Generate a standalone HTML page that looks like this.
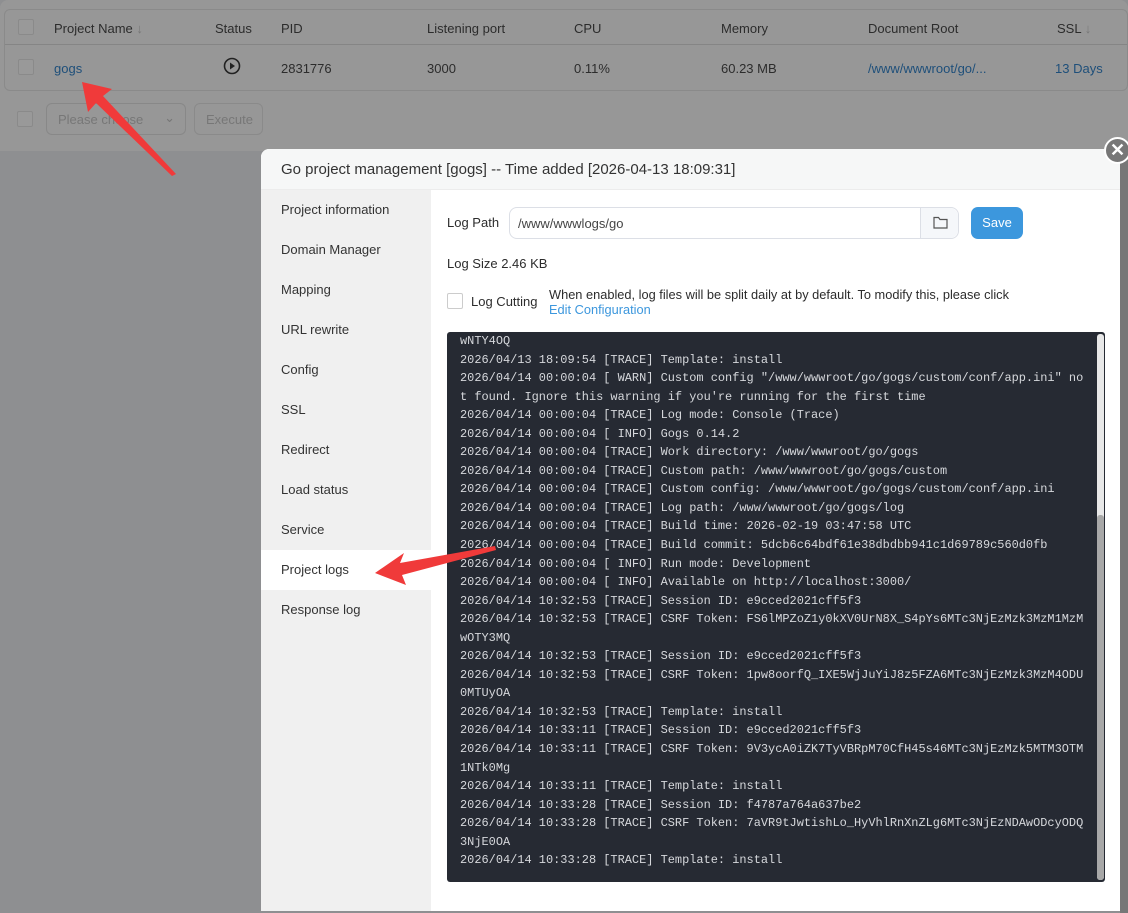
<!DOCTYPE html>
<html><head><meta charset="utf-8"><style>
*{box-sizing:border-box;margin:0;padding:0}
body{width:1128px;height:913px;overflow:hidden;background:#8e8f91;font-family:"Liberation Sans",sans-serif;font-size:13px;color:#333;position:relative}
.top{position:absolute;left:0;top:0;width:1128px;height:151px;background:#979797;border-radius:8px 8px 0 0}
.tbl{position:absolute;left:4px;top:9px;width:1124px;height:82px;border:1px solid #8a8a8a;border-radius:6px}
.hr{position:absolute;left:0;top:34px;width:100%;border-top:1px solid #858585}
.t{position:absolute;color:#2c2c2c;font-size:13px}
.lnk{color:#1e4f7a}
.cb{position:absolute;width:16px;height:16px;border:1px solid #8a8a8a;border-radius:2px;background:#999}
.modal{position:absolute;left:261px;top:149px;width:859px;height:762px;background:#fff;border-radius:8px 0 0 0;overflow:hidden}
.mh{height:41px;background:#f6f7f7;border-bottom:1px solid #ececec;padding:12px 20px;font-size:15px;color:#333}
.side{position:absolute;left:0;top:41px;width:170px;bottom:0;background:#f0f0f0}
.side div{height:40px;line-height:40px;padding-left:20px;font-size:13px;color:#333}
.side .on{background:#fff}
.log{position:absolute;left:186px;top:183px;width:658px;height:550px;background:#262a33;border-radius:3px;overflow:hidden;padding:0 13px;font-family:"Liberation Mono",monospace;font-size:11.95px;line-height:18.55px;color:#d6d8dc;white-space:pre}
</style></head><body>
<div class="top">
 <div class="tbl">
  <div class="cb" style="left:13px;top:9px"></div>
  <span class="t" style="left:49px;top:11px">Project Name <span style="color:#777">↓</span></span>
  <span class="t" style="left:210px;top:11px">Status</span>
  <span class="t" style="left:276px;top:11px">PID</span>
  <span class="t" style="left:422px;top:11px">Listening port</span>
  <span class="t" style="left:569px;top:11px">CPU</span>
  <span class="t" style="left:716px;top:11px">Memory</span>
  <span class="t" style="left:863px;top:11px">Document Root</span>
  <span class="t" style="left:1052px;top:11px">SSL <span style="color:#777">↓</span></span>
  <div class="hr"></div>
  <div class="cb" style="left:13px;top:49px"></div>
  <span class="t lnk" style="left:49px;top:51px">gogs</span>
  <svg style="position:absolute;left:218px;top:47px" width="18" height="18"><circle cx="9" cy="9" r="7.5" fill="none" stroke="#222" stroke-width="1.6"/><path d="M7 5.5L12 9L7 12.5Z" fill="#222"/></svg>
  <span class="t" style="left:276px;top:51px">2831776</span>
  <span class="t" style="left:422px;top:51px">3000</span>
  <span class="t" style="left:569px;top:51px">0.11%</span>
  <span class="t" style="left:716px;top:51px">60.23 MB</span>
  <span class="t lnk" style="left:863px;top:51px">/www/wwwroot/go/...</span>
  <span class="t lnk" style="left:1050px;top:51px">13 Days</span>
 </div>
 <div class="cb" style="left:17px;top:111px"></div>
 <div style="position:absolute;left:46px;top:103px;width:140px;height:32px;border:1px solid #888;border-radius:6px;padding:8px 11px;color:#777">Please choose<span style="position:absolute;right:10px;top:6px">⌄</span></div>
 <div style="position:absolute;left:194px;top:103px;width:69px;height:32px;border:1px solid #8a8a8a;border-radius:6px;padding:8px 11px;color:#777">Execute</div>
</div>
<div class="modal">
 <div class="mh">Go project management [gogs] -- Time added [2026-04-13 18:09:31]</div>
 <div class="side"><div>Project information</div><div>Domain Manager</div><div>Mapping</div><div>URL rewrite</div><div>Config</div><div>SSL</div><div>Redirect</div><div>Load status</div><div>Service</div><div class="on">Project logs</div><div>Response log</div></div>
 <span class="t" style="left:186px;top:66px">Log Path</span>
 <div style="position:absolute;left:248px;top:58px;width:450px;height:32px;border:1px solid #dcdfe6;border-radius:8px;padding:8px;color:#444">/www/wwwlogs/go
  <div style="position:absolute;right:0;top:0;width:38px;height:30px;background:#f5f7fa;border-left:1px solid #dcdfe6;border-radius:0 8px 8px 0"><svg style="position:absolute;left:12px;top:8px" width="15" height="13"><path d="M1 1.5H5.5L7 3.5H14V12H1Z" fill="none" stroke="#555" stroke-width="1.2"/></svg></div></div>
 <div style="position:absolute;left:710px;top:58px;width:52px;height:32px;background:#3c97dd;border-radius:7px;color:#fff;text-align:center;line-height:32px">Save</div>
 <span class="t" style="left:186px;top:107px">Log Size 2.46 KB</span>
 <div style="position:absolute;left:186px;top:144px;width:16px;height:16px;border:1px solid #ccc;border-radius:2px"></div>
 <span class="t" style="left:210px;top:145px">Log Cutting</span>
 <span class="t" style="left:288px;top:138px;font-size:12.8px">When enabled, log files will be split daily at by default. To modify this, please click</span>
 <span class="t" style="left:288px;top:153px;font-size:12.8px;color:#3c97dd">Edit Configuration</span>
 <div class="log">wNTY4OQ
2026/04/13 18:09:54 [TRACE] Template: install
2026/04/14 00:00:04 [ WARN] Custom config "/www/wwwroot/go/gogs/custom/conf/app.ini" no
t found. Ignore this warning if you're running for the first time
2026/04/14 00:00:04 [TRACE] Log mode: Console (Trace)
2026/04/14 00:00:04 [ INFO] Gogs 0.14.2
2026/04/14 00:00:04 [TRACE] Work directory: /www/wwwroot/go/gogs
2026/04/14 00:00:04 [TRACE] Custom path: /www/wwwroot/go/gogs/custom
2026/04/14 00:00:04 [TRACE] Custom config: /www/wwwroot/go/gogs/custom/conf/app.ini
2026/04/14 00:00:04 [TRACE] Log path: /www/wwwroot/go/gogs/log
2026/04/14 00:00:04 [TRACE] Build time: 2026-02-19 03:47:58 UTC
2026/04/14 00:00:04 [TRACE] Build commit: 5dcb6c64bdf61e38dbdbb941c1d69789c560d0fb
2026/04/14 00:00:04 [ INFO] Run mode: Development
2026/04/14 00:00:04 [ INFO] Available on http://localhost:3000/
2026/04/14 10:32:53 [TRACE] Session ID: e9cced2021cff5f3
2026/04/14 10:32:53 [TRACE] CSRF Token: FS6lMPZoZ1y0kXV0UrN8X_S4pYs6MTc3NjEzMzk3MzM1MzM
wOTY3MQ
2026/04/14 10:32:53 [TRACE] Session ID: e9cced2021cff5f3
2026/04/14 10:32:53 [TRACE] CSRF Token: 1pw8oorfQ_IXE5WjJuYiJ8z5FZA6MTc3NjEzMzk3MzM4ODU
0MTUyOA
2026/04/14 10:32:53 [TRACE] Template: install
2026/04/14 10:33:11 [TRACE] Session ID: e9cced2021cff5f3
2026/04/14 10:33:11 [TRACE] CSRF Token: 9V3ycA0iZK7TyVBRpM70CfH45s46MTc3NjEzMzk5MTM3OTM
1NTk0Mg
2026/04/14 10:33:11 [TRACE] Template: install
2026/04/14 10:33:28 [TRACE] Session ID: f4787a764a637be2
2026/04/14 10:33:28 [TRACE] CSRF Token: 7aVR9tJwtishLo_HyVhlRnXnZLg6MTc3NjEzNDAwODcyODQ
3NjE0OA
2026/04/14 10:33:28 [TRACE] Template: install</div>
 <div style="position:absolute;left:836px;top:185px;width:7px;height:546px;background:#e8e8e8;border-radius:3px"></div>
 <div style="position:absolute;left:836px;top:366px;width:7px;height:365px;background:#a8a8a8;border-radius:3px"></div>
</div>
<div style="position:absolute;left:1120px;top:160px;width:8px;height:753px;background:#777"></div>
<div style="position:absolute;left:1104px;top:137px;width:27px;height:27px;border-radius:50%;background:#777;border:2px solid #fff;color:#fff;font-size:18px;line-height:22px;text-align:center;font-weight:bold">✕</div>
<svg style="position:absolute;left:0;top:0" width="1128" height="913">
 <path d="M82 82L112 89L103 96L176 174L172 176L96 103L88 112Z" fill="#f03a3a"/>
 <path d="M375 573L404 553L400 563L495 546L496 550L402 575L406 585Z" fill="#f03a3a"/>
</svg>
</body></html>
